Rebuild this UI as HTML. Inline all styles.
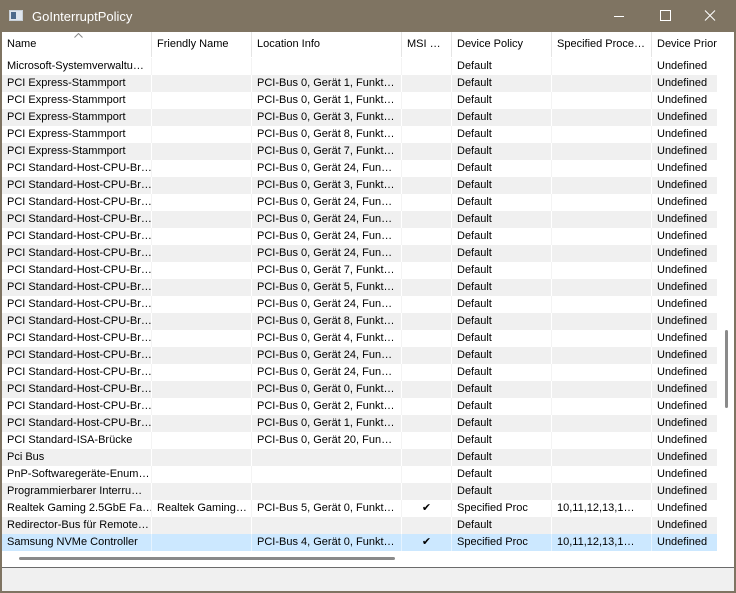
<!DOCTYPE html><html><head><meta charset="utf-8"><style>
*{margin:0;padding:0;box-sizing:border-box}
body{width:736px;height:593px;overflow:hidden;background:#7f7462;font-family:"Liberation Sans","Segoe UI",sans-serif;font-size:11px;color:#000;position:relative}
.title{position:absolute;left:0;top:0;width:736px;height:32px;color:#fff;font-size:13px}
.title .t{position:absolute;left:32px;top:9px}
.ico{position:absolute;left:9px;top:10px;width:14px;height:11px;background:#dfe6ee;border:1px solid #c8d0d8}
.ico:before{content:"";position:absolute;left:1px;top:1px;width:5px;height:7px;background:#4d6a8c}
.win{position:absolute;left:2px;top:32px;width:732px;height:559px;background:#f0f0f0}
.list{position:absolute;left:0;top:0;width:732px;height:536px;background:#fff;border-bottom:1px solid #6b6b6b}
.row{position:absolute;left:0;height:17px;width:715px;display:flex;line-height:17px;white-space:nowrap}
.row div{overflow:hidden;padding-left:5px;border-right:1px solid #f4f4f4}
.g{background:#f0f0f0}.g div{border-right-color:#fff}
.s{background:#cce8ff}.s div{border-right-color:#e5f3ff}
.hd{top:0;height:25px;line-height:25px;padding-top:0}
.hd div{border-right:1px solid #e5e5e5}
.c1{width:150px}.c2{width:100px}.c3{width:150px}.c4{width:50px}.c5{width:100px}.c6{width:100px}.c7{width:65px;border-right:none!important}
.c4{text-align:center;padding-left:0!important}
.hs{position:absolute;left:17px;top:525px;width:376px;height:3px;background:#8a8a8a;border-radius:2px}
.vs{position:absolute;left:723px;top:298px;width:3px;height:78px;background:#8a8a8a;border-radius:2px}
</style></head><body>
<div class="title"><div class="ico"></div><div class="t">GoInterruptPolicy</div>
<svg style="position:absolute;left:608px;top:10px" width="110" height="12"><path d="M6 6.5h10" stroke="#fff"/><rect x="52.5" y="0.5" width="10" height="10" fill="none" stroke="#fff"/><path d="M97 0.5l10 10M107 0.5l-10 10" stroke="#fff"/></svg></div>
<div class="win"><div class="list">
<div class="row hd"><div class="c1">Name</div><div class="c2">Friendly Name</div><div class="c3">Location Info</div><div class="c4" style="text-align:left;padding-left:5px!important">MSI …</div><div class="c5">Device Policy</div><div class="c6">Specified Proce…</div><div class="c7">Device Priori</div></div>
<svg style="position:absolute;left:72px;top:1px" width="9" height="5"><path d="M0.5 4.5L4.5 0.5L8.5 4.5" fill="none" stroke="#888"/></svg>
<div id="rows"></div>
<div class="hs"></div><div class="vs"></div>
</div></div>
<script>
var d=[["Microsoft-Systemverwaltu…","","",""]];
[1,1,3,8,7].forEach(function(x){d.push(["PCI Express-Stammport","","PCI-Bus 0, Gerät "+x+", Funkt…",""])});
[24,3,24,24,24,24,7,5,24,8,4,24,24,0,2,1].forEach(function(x){d.push(["PCI Standard-Host-CPU-Br…","","PCI-Bus 0, Gerät "+x+(x>9?", Fun…":", Funkt…"),""])});
d.push(["PCI Standard-ISA-Brücke","","PCI-Bus 0, Gerät 20, Fun…",""]);
d.push(["Pci Bus","","",""]);d.push(["PnP-Softwaregeräte-Enum…","","",""]);d.push(["Programmierbarer Interru…","","",""]);
d.push(["Realtek Gaming 2.5GbE Fa…","Realtek Gaming…","PCI-Bus 5, Gerät 0, Funkt…","✔"]);
d.push(["Redirector-Bus für Remote…","","",""]);
d.push(["Samsung NVMe Controller","","PCI-Bus 4, Gerät 0, Funkt…","✔"]);
var h="";d.forEach(function(r,i){var sp=r[3]?"Specified Proc":"Default",pr=r[3]?"10,11,12,13,1…":"";
var cl=i==28?"row s":(i%2?"row g":"row");
h+='<div class="'+cl+'" style="top:'+(26+i*17)+'px"><div class="c1">'+r[0]+'</div><div class="c2">'+r[1]+'</div><div class="c3">'+r[2]+'</div><div class="c4">'+r[3]+'</div><div class="c5">'+sp+'</div><div class="c6">'+pr+'</div><div class="c7">Undefined</div></div>'});
document.getElementById("rows").innerHTML=h;
</script>
</body></html>
